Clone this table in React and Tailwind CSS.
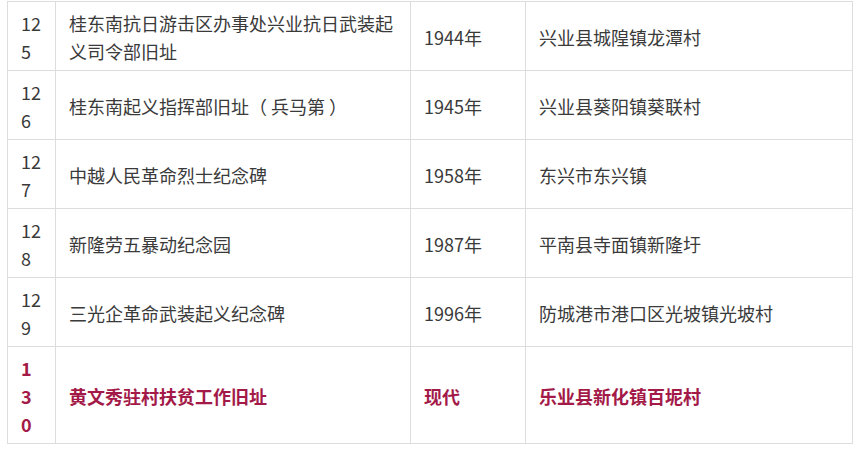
const rows = [
  { no: '125', name: '桂东南抗日游击区办事处兴业抗日武装起义司令部旧址', year: '1944年', place: '兴业县城隍镇龙潭村' },
  { no: '126', name: '桂东南起义指挥部旧址（ 兵马第 ）', year: '1945年', place: '兴业县葵阳镇葵联村' },
  { no: '127', name: '中越人民革命烈士纪念碑', year: '1958年', place: '东兴市东兴镇' },
  { no: '128', name: '新隆劳五暴动纪念园', year: '1987年', place: '平南县寺面镇新隆圩' },
  { no: '129', name: '三光企革命武装起义纪念碑', year: '1996年', place: '防城港市港口区光坡镇光坡村' },
  { no: '130', name: '黄文秀驻村扶贫工作旧址', year: '现代', place: '乐业县新化镇百坭村', highlight: true },
];

export default function App() {
  return (
    <div className="w-[861px] h-[464px] bg-white overflow-hidden pt-px pl-[7px]">
      <table
        className="border-collapse table-fixed w-[845px] text-[18px] leading-[28px] text-[#3a3a3a]"
        style={{ fontFamily: '"Noto Sans CJK SC", "Noto Sans", sans-serif' }}
      >
        <colgroup>
          <col className="w-[48px]" />
          <col className="w-[355px]" />
          <col className="w-[115px]" />
          <col className="w-[327px]" />
        </colgroup>
        <tbody>
          {rows.map((r) => {
            const cell = `border border-[#dddddd] px-[13px] pt-[7px] pb-[5px] align-middle ${
              r.highlight ? 'font-bold text-[#a31a48]' : ''
            }`;
            return (
              <tr key={r.no}>
                <td className={`${cell} break-all`}>{r.no}</td>
                <td className={cell}>{r.name}</td>
                <td className={cell}>{r.year}</td>
                <td className={cell}>{r.place}</td>
              </tr>
            );
          })}
        </tbody>
      </table>
    </div>
  );
}
